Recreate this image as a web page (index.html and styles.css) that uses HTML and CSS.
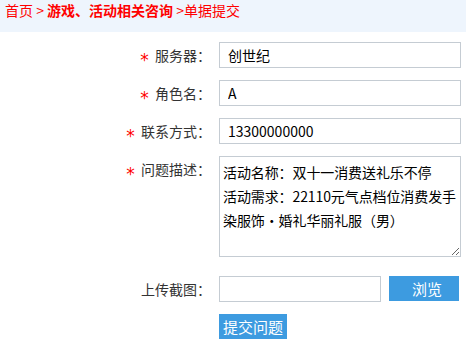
FILE: index.html
```html
<!DOCTYPE html>
<html lang="zh-CN">
<head>
    <meta charset="UTF-8">
    <title>单据提交</title>
    <link rel="stylesheet" href="styles.css">
</head>
<body>
    <div class="crumb">
        <a href="#">首页</a> &gt; <b>游戏、活动相关咨询</b> &gt;单据提交
    </div>
    <form class="form">
        <div class="row">
            <label class="label"><span class="star">*</span> 服务器：</label>
            <input class="text" type="text" value="创世纪">
        </div>
        <div class="row">
            <label class="label"><span class="star">*</span> 角色名：</label>
            <input class="text" type="text" value="A">
        </div>
        <div class="row">
            <label class="label"><span class="star">*</span> 联系方式：</label>
            <input class="text" type="text" value="13300000000">
        </div>
        <div class="row">
            <label class="label"><span class="star">*</span> 问题描述：</label>
            <textarea class="area">活动名称：双十一消费送礼乐不停
活动需求：22110元气点档位消费发手染服饰·婚礼华丽礼服（男）</textarea>
        </div>
        <div class="row upload">
            <label class="label">上传截图：</label>
            <input class="text file" type="text">
            <button type="button" class="btn browse">浏览</button>
        </div>
        <div class="row">
            <span class="label"></span>
            <button type="button" class="btn submit">提交问题</button>
        </div>
    </form>
</body>
</html>
```

FILE: styles.css
```css
body {
    margin: 0;
    background: #fff;
    font-family: "Noto Sans CJK SC", "Liberation Sans", sans-serif;
    font-size: 14px;
    color: #333;
}
.crumb {
    height: 32px;
    line-height: 20px;
    padding-left: 5px;
    background: #eef5fd;
    color: #ff0000;
}
.crumb a {
    color: #ff0000;
    text-decoration: none;
}
.form {
    padding-top: 10px;
}
.row {
    display: flex;
    align-items: flex-start;
    gap: 8px;
    margin-bottom: 12px;
}
.label {
    width: 211px;
    flex: none;
    text-align: right;
    line-height: 26px;
    color: #333;
}
.star {
    display: inline-block;
    margin-right: 3px;
    color: #ff0000;
    font-family: "DejaVu Sans", sans-serif;
    font-size: 17px;
    line-height: 10px;
    vertical-align: -5px;
}
.text {
    box-sizing: border-box;
    width: 242px;
    height: 26px;
    padding: 0 8px;
    border: 1px solid #c5ccd3;
    font-family: inherit;
    font-size: 14px;
    color: #000;
    outline: none;
}
.area {
    box-sizing: border-box;
    width: 242px;
    height: 101px;
    padding: 3px 0 3px 3px;
    border: 1px solid #c5ccd3;
    font-family: inherit;
    font-size: 14px;
    line-height: 24px;
    letter-spacing: -0.1px;
    color: #000;
    resize: both;
}
.upload {
    margin-top: 19px;
}
.file {
    width: 162px;
}
.btn {
    height: 25px;
    border: none;
    padding: 0;
    background: #3d9be0;
    color: #fff;
    font-family: inherit;
    font-size: 15px;
    cursor: pointer;
}
.browse {
    width: 70px;
    padding-left: 6px;
}
.submit {
    width: 68px;
}
```
